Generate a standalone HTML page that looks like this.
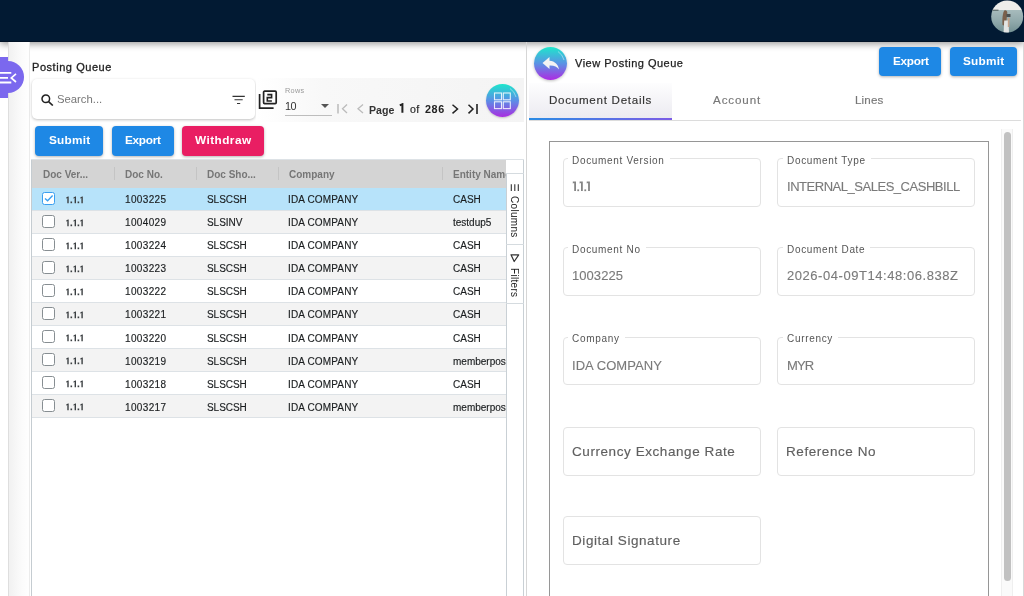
<!DOCTYPE html>
<html><head><meta charset="utf-8">
<style>
*{margin:0;padding:0;box-sizing:border-box}
html,body{width:1024px;height:596px;overflow:hidden;background:#fff;font-family:"Liberation Sans",sans-serif;position:relative}
.t,.cell,.lbl,.val,.ph{will-change:transform}
.a{position:absolute}
.t{position:absolute;white-space:nowrap;line-height:1}
#topbar{left:0;top:0;width:1024px;height:42px;background:#021a33;box-shadow:0 2px 7px rgba(0,0,0,.4);z-index:5}
#topbar:after{content:"";position:absolute;left:0;right:0;bottom:0;height:1px;background:#011226}
.btn{position:absolute;border-radius:4px;background:#1e88e5;box-shadow:0 1px 3px rgba(0,0,0,.3);color:#fff;font-weight:bold}
.hdr{position:absolute;top:159.5px;height:28.2px;left:31.5px;width:475px;background:#d4d4d4}
.row{position:absolute;left:31.5px;width:475px;height:23px;border-bottom:1px solid #dde2e6}
.cb{position:absolute;left:10.6px;top:4.6px;width:13px;height:13px;border:1.4px solid #878e92;border-radius:2.5px;background:#fff}
.cell{position:absolute;top:0;line-height:1;font-size:10px;color:#1a1d1f;white-space:nowrap;-webkit-text-stroke:0.15px #1a1d1f}
.fbox{position:absolute;width:198px;height:48.6px;border:1px solid #e3e3e3;border-radius:4px}
.lbl{position:absolute;left:4.6px;top:-3.4px;padding:0 5px 0 4px;background:#fff;font-size:10px;line-height:10px;color:#555;white-space:nowrap}
.val{position:absolute;left:8.4px;top:20.9px;font-size:13px;line-height:13px;color:#7a7a7a;white-space:nowrap;-webkit-text-stroke:0.12px #7a7a7a}
.ph{position:absolute;left:8.2px;top:17.4px;font-size:13.5px;line-height:13px;color:#5f5f5f;white-space:nowrap;-webkit-text-stroke:0.15px #5f5f5f}
</style></head><body>

<!-- top bar -->
<div id="topbar" class="a">
  <svg class="a" style="left:991px;top:0" width="33" height="34" viewBox="0 0 33 34">
  <defs><clipPath id="av"><circle cx="16.2" cy="16.5" r="16"/></clipPath>
  <linearGradient id="sea" x1="0" y1="0" x2="0" y2="1"><stop offset="0" stop-color="#a7bbbc"/><stop offset="0.5" stop-color="#8fa8aa"/><stop offset="1" stop-color="#6f8d90"/></linearGradient></defs>
  <g clip-path="url(#av)">
    <rect x="0" y="0" width="33" height="10.5" fill="#eeedea"/>
    <rect x="0" y="10" width="33" height="24" fill="url(#sea)"/>
    <path d="M1 10.2H7.5" stroke="#4a5655" stroke-width="1"/>
    <path d="M11.5 25C11 19 11.8 12.5 13.3 10.5C14.8 9.6 16.3 10.5 16.3 13L14.8 26Z" fill="#7a604b"/>
    <path d="M13.2 20.5H17.5L18 33H12.6Z" fill="#e3e5e4"/>
    <path d="M15.5 14H19.5V17H15.5Z" fill="#4a5254"/>
    <path d="M16.8 17.5L18.6 18.2L18.3 27L16.8 27Z" fill="#c4a28b"/>
  </g>
</svg>

<!-- left sidebar strip -->
<div class="a" style="left:8px;top:42px;width:1px;height:554px;background:#dedede"></div>
<div class="a" style="left:9px;top:42px;width:20.5px;height:554px;background:linear-gradient(90deg,#f1f1f1,#fbfbfb 60%,#fff)"></div>
<div class="a" style="left:29px;top:42px;width:1px;height:554px;background:#ececec"></div>

<!-- purple toggle -->
<div class="a" style="left:0;top:57px;width:8px;height:41px;background:#7b68ee"></div>
<div class="a" style="left:-8px;top:61px;width:32px;height:32px;border-radius:50%;background:#7b68ee"></div>
<svg class="a" style="left:0;top:70px" width="18" height="16" viewBox="0 0 18 16">
  <path d="M0 2.8H11.3M0 7.8H8M0 12.5H11.3" stroke="#fff" stroke-width="1.8"/>
  <path d="M16 3.8L11.3 7.9L16 12" stroke="#fff" stroke-width="1.7" fill="none"/>
</svg>

<!-- left panel -->
<div class="t" style="left:31.5px;top:62px;font-size:11px;color:#222;-webkit-text-stroke:0.3px #222;letter-spacing:0.55px">Posting Queue</div>

<div class="a" style="left:31.5px;top:79px;width:223.5px;height:40px;border-radius:5px;background:#fff;box-shadow:0 1px 3px rgba(0,0,0,.25)"></div>
<svg class="a" style="left:41px;top:94px" width="13" height="12" viewBox="0 0 13 12">
  <circle cx="4.8" cy="4.8" r="3.8" stroke="#222" stroke-width="1.5" fill="none"/>
  <path d="M7.6 7.6L11.8 11.5" stroke="#222" stroke-width="1.6"/>
</svg>
<div class="t" style="left:56.5px;top:93.5px;font-size:11.3px;color:#777">Search...</div>
<svg class="a" style="left:232px;top:95px" width="14" height="10" viewBox="0 0 14 10">
  <path d="M0.5 1.4H12.8M2.5 4.7H10.7M5 8.5H8.2" stroke="#333" stroke-width="1.1"/>
</svg>

<!-- pagination bar -->
<div class="a" style="left:256px;top:78px;width:268px;height:44px;background:linear-gradient(90deg,#fff 0%,#f8f8f8 25%,#f4f4f4 100%)"></div>
<svg class="a" style="left:258px;top:89px" width="20" height="20" viewBox="0 0 20 20">
  <path d="M1.6 5V19.1H15.6" stroke="#222" stroke-width="1.7" fill="none"/>
  <rect x="5.6" y="2.2" width="12.6" height="12.4" rx="1" stroke="#222" stroke-width="1.7" fill="none"/>
  <path d="M9.3 5.6H13.6V8.6H9.3V12H13.9" stroke="#222" stroke-width="1.6" fill="none"/>
</svg>
<div class="t" style="left:284.7px;top:86.8px;font-size:7.3px;color:#9a9a9a;letter-spacing:0.3px">Rows</div>
<div class="t" style="left:284.5px;top:100.8px;font-size:10.8px;color:#333;letter-spacing:-0.4px">10</div>
<svg class="a" style="left:320px;top:103px" width="10" height="6" viewBox="0 0 10 6"><path d="M1 1H9L5 5Z" fill="#555"/></svg>
<div class="a" style="left:284.7px;top:115.2px;width:47.5px;height:1.2px;background:#bdbdbd"></div>
<svg class="a" style="left:336px;top:103px" width="14" height="12" viewBox="0 0 14 12">
  <path d="M2 1V10.5" stroke="#bbb" stroke-width="1.5"/>
  <path d="M11 1.5L6.5 5.8L11 10" stroke="#bbb" stroke-width="1.3" fill="none"/>
</svg>
<svg class="a" style="left:355px;top:103px" width="10" height="12" viewBox="0 0 10 12">
  <path d="M8 1.5L3 5.8L8 10" stroke="#bbb" stroke-width="1.3" fill="none"/>
</svg>
<div class="t" style="left:368.8px;top:104.5px;font-size:10.6px;font-weight:bold;color:#333">Page</div>
<svg class="a" style="left:399px;top:103px" width="6" height="11" viewBox="0 0 6 11"><path d="M0.8 2.4L3.4 1.2V9.8" stroke="#222" stroke-width="2" fill="none" stroke-linejoin="miter"/></svg>
<div class="t" style="left:409.5px;top:104px;font-size:10.6px;color:#2a2a2a;-webkit-text-stroke:0.2px #2a2a2a;letter-spacing:0.3px">of</div>
<div class="t" style="left:425.3px;top:104px;font-size:10.8px;font-weight:bold;color:#222;letter-spacing:0.6px">286</div>
<svg class="a" style="left:450px;top:103px" width="10" height="12" viewBox="0 0 10 12">
  <path d="M2.5 1.8L7.5 6L2.5 10.4" stroke="#222" stroke-width="1.5" fill="none"/>
</svg>
<svg class="a" style="left:466px;top:103px" width="14" height="12" viewBox="0 0 14 12">
  <path d="M2.5 1.8L7 6L2.5 10.4" stroke="#222" stroke-width="1.5" fill="none"/>
  <path d="M11 1V11" stroke="#222" stroke-width="1.6"/>
</svg>
<div class="a" style="left:486px;top:84.2px;width:33px;height:33px;border-radius:50%;background:linear-gradient(#1de6cc,#5a8fe6 50%,#a92ee0);box-shadow:0 1px 2px rgba(0,0,0,.2)"></div>
<svg class="a" style="left:486px;top:84.2px" width="33" height="33" viewBox="0 0 33 33"><path d="M24 4.5A14.5 14.5 0 0 1 30 13" stroke="rgba(255,255,255,.55)" stroke-width="0.8" fill="none"/></svg>
<svg class="a" style="left:493px;top:92px" width="19" height="18" viewBox="0 0 19 18">
  <rect x="1.5" y="1" width="7" height="6.8" stroke="#fff" stroke-width="1.1" fill="none" opacity=".85"/>
  <rect x="10.3" y="1" width="7" height="6.8" stroke="#fff" stroke-width="1.1" fill="none" opacity=".85"/>
  <rect x="1.5" y="9.8" width="7" height="6.8" stroke="#fff" stroke-width="1.1" fill="none" opacity=".85"/>
  <rect x="10.3" y="9.8" width="7" height="6.8" stroke="#fff" stroke-width="1.1" fill="none" opacity=".85"/>
</svg>

<!-- action buttons -->
<div class="btn" style="left:35.4px;top:126px;width:67.6px;height:29.8px"></div>
<div class="t" style="left:48.6px;top:135px;font-size:11.8px;font-weight:bold;color:#fff;letter-spacing:0.24px">Submit</div>
<div class="btn" style="left:112px;top:126px;width:61.5px;height:29.8px"></div>
<div class="t" style="left:124.6px;top:135px;font-size:11.8px;font-weight:bold;color:#fff;letter-spacing:-0.3px">Export</div>
<div class="btn" style="left:182px;top:126px;width:81.5px;height:29.8px;background:#e91e63"></div>
<div class="t" style="left:194.9px;top:135px;font-size:11.8px;font-weight:bold;color:#fff;letter-spacing:0.44px">Withdraw</div>

<!-- grid -->
<div class="a" style="left:30.5px;top:159.5px;width:1px;height:437px;background:#c5ccd1"></div>
<div class="hdr"></div>
<div class="t" style="left:42.6px;top:170px;font-size:10px;font-weight:bold;color:#767676">Doc Ver...</div>
<div class="t" style="left:124.8px;top:170px;font-size:10px;font-weight:bold;color:#767676">Doc No.</div>
<div class="t" style="left:206.9px;top:170px;font-size:10px;font-weight:bold;color:#767676">Doc Sho...</div>
<div class="t" style="left:289px;top:170px;font-size:10px;font-weight:bold;color:#767676">Company</div>
<div class="a" style="left:442px;top:159.5px;width:64.6px;height:28px;overflow:hidden"><div class="t" style="left:11.4px;top:10.5px;font-size:10px;font-weight:bold;color:#767676">Entity Name</div></div>
<div class="a" style="left:113.5px;top:167px;width:1px;height:13px;background:#c4c4c4"></div>
<div class="a" style="left:196px;top:167px;width:1px;height:13px;background:#c4c4c4"></div>
<div class="a" style="left:278.3px;top:167px;width:1px;height:13px;background:#c4c4c4"></div>
<div class="a" style="left:442.2px;top:167px;width:1px;height:13px;background:#c4c4c4"></div>

<div id="rows"><div class="row" style="top:187.5px;background:#b7e3fa"><div class="cb" style="border-color:#3a9ff0;border-width:1.6px"><svg class="a" style="left:0.6px;top:1.4px" width="10" height="8" viewBox="0 0 10 8"><path d="M1 4.4L3.6 6.7L8.6 1.6" stroke="#3a9ff0" stroke-width="1.4" fill="none"/></svg></div><svg class="a" style="left:32px;top:7px" width="20" height="10" viewBox="63.5 7 20 10"><path d="M68.2 8.6V15.3H66.8V10.1L65.5 10.6V9.7L67.4 8.6Z" fill="#3b3f42"/><path d="M75.5 8.6V15.3H74.1V10.1L72.8 10.6V9.7L74.7 8.6Z" fill="#3b3f42"/><path d="M82.3 8.6V15.3H80.89999999999999V10.1L79.6 10.6V9.7L81.5 8.6Z" fill="#3b3f42"/><rect x="70.0" y="13.5" width="1.6" height="1.7" fill="#3b3f42"/><rect x="77.10000000000001" y="13.5" width="1.6" height="1.7" fill="#3b3f42"/></svg><div class="cell" style="left:93.1px;top:7.9px;letter-spacing:0.35px">1003225</div><div class="cell" style="left:175.1px;top:7.9px;letter-spacing:-0.05px">SLSCSH</div><div class="cell" style="left:256.3px;top:7.9px;letter-spacing:0.15px">IDA COMPANY</div><div class="a" style="left:410px;top:0;width:65px;height:22px;overflow:hidden"><div class="cell" style="left:11.6px;top:7.9px">CASH</div></div></div>
<div class="row" style="top:210.5px;background:#f3f3f3"><div class="cb"></div><svg class="a" style="left:32px;top:7px" width="20" height="10" viewBox="63.5 7 20 10"><path d="M68.2 8.6V15.3H66.8V10.1L65.5 10.6V9.7L67.4 8.6Z" fill="#3b3f42"/><path d="M75.5 8.6V15.3H74.1V10.1L72.8 10.6V9.7L74.7 8.6Z" fill="#3b3f42"/><path d="M82.3 8.6V15.3H80.89999999999999V10.1L79.6 10.6V9.7L81.5 8.6Z" fill="#3b3f42"/><rect x="70.0" y="13.5" width="1.6" height="1.7" fill="#3b3f42"/><rect x="77.10000000000001" y="13.5" width="1.6" height="1.7" fill="#3b3f42"/></svg><div class="cell" style="left:93.1px;top:7.9px;letter-spacing:0.35px">1004029</div><div class="cell" style="left:175.1px;top:7.9px;letter-spacing:-0.05px">SLSINV</div><div class="cell" style="left:256.3px;top:7.9px;letter-spacing:0.15px">IDA COMPANY</div><div class="a" style="left:410px;top:0;width:65px;height:22px;overflow:hidden"><div class="cell" style="left:11.6px;top:7.9px">testdup5</div></div></div>
<div class="row" style="top:233.6px;background:#fff"><div class="cb"></div><svg class="a" style="left:32px;top:7px" width="20" height="10" viewBox="63.5 7 20 10"><path d="M68.2 8.6V15.3H66.8V10.1L65.5 10.6V9.7L67.4 8.6Z" fill="#3b3f42"/><path d="M75.5 8.6V15.3H74.1V10.1L72.8 10.6V9.7L74.7 8.6Z" fill="#3b3f42"/><path d="M82.3 8.6V15.3H80.89999999999999V10.1L79.6 10.6V9.7L81.5 8.6Z" fill="#3b3f42"/><rect x="70.0" y="13.5" width="1.6" height="1.7" fill="#3b3f42"/><rect x="77.10000000000001" y="13.5" width="1.6" height="1.7" fill="#3b3f42"/></svg><div class="cell" style="left:93.1px;top:7.9px;letter-spacing:0.35px">1003224</div><div class="cell" style="left:175.1px;top:7.9px;letter-spacing:-0.05px">SLSCSH</div><div class="cell" style="left:256.3px;top:7.9px;letter-spacing:0.15px">IDA COMPANY</div><div class="a" style="left:410px;top:0;width:65px;height:22px;overflow:hidden"><div class="cell" style="left:11.6px;top:7.9px">CASH</div></div></div>
<div class="row" style="top:256.6px;background:#f3f3f3"><div class="cb"></div><svg class="a" style="left:32px;top:7px" width="20" height="10" viewBox="63.5 7 20 10"><path d="M68.2 8.6V15.3H66.8V10.1L65.5 10.6V9.7L67.4 8.6Z" fill="#3b3f42"/><path d="M75.5 8.6V15.3H74.1V10.1L72.8 10.6V9.7L74.7 8.6Z" fill="#3b3f42"/><path d="M82.3 8.6V15.3H80.89999999999999V10.1L79.6 10.6V9.7L81.5 8.6Z" fill="#3b3f42"/><rect x="70.0" y="13.5" width="1.6" height="1.7" fill="#3b3f42"/><rect x="77.10000000000001" y="13.5" width="1.6" height="1.7" fill="#3b3f42"/></svg><div class="cell" style="left:93.1px;top:7.9px;letter-spacing:0.35px">1003223</div><div class="cell" style="left:175.1px;top:7.9px;letter-spacing:-0.05px">SLSCSH</div><div class="cell" style="left:256.3px;top:7.9px;letter-spacing:0.15px">IDA COMPANY</div><div class="a" style="left:410px;top:0;width:65px;height:22px;overflow:hidden"><div class="cell" style="left:11.6px;top:7.9px">CASH</div></div></div>
<div class="row" style="top:279.6px;background:#fff"><div class="cb"></div><svg class="a" style="left:32px;top:7px" width="20" height="10" viewBox="63.5 7 20 10"><path d="M68.2 8.6V15.3H66.8V10.1L65.5 10.6V9.7L67.4 8.6Z" fill="#3b3f42"/><path d="M75.5 8.6V15.3H74.1V10.1L72.8 10.6V9.7L74.7 8.6Z" fill="#3b3f42"/><path d="M82.3 8.6V15.3H80.89999999999999V10.1L79.6 10.6V9.7L81.5 8.6Z" fill="#3b3f42"/><rect x="70.0" y="13.5" width="1.6" height="1.7" fill="#3b3f42"/><rect x="77.10000000000001" y="13.5" width="1.6" height="1.7" fill="#3b3f42"/></svg><div class="cell" style="left:93.1px;top:7.9px;letter-spacing:0.35px">1003222</div><div class="cell" style="left:175.1px;top:7.9px;letter-spacing:-0.05px">SLSCSH</div><div class="cell" style="left:256.3px;top:7.9px;letter-spacing:0.15px">IDA COMPANY</div><div class="a" style="left:410px;top:0;width:65px;height:22px;overflow:hidden"><div class="cell" style="left:11.6px;top:7.9px">CASH</div></div></div>
<div class="row" style="top:302.6px;background:#f3f3f3"><div class="cb"></div><svg class="a" style="left:32px;top:7px" width="20" height="10" viewBox="63.5 7 20 10"><path d="M68.2 8.6V15.3H66.8V10.1L65.5 10.6V9.7L67.4 8.6Z" fill="#3b3f42"/><path d="M75.5 8.6V15.3H74.1V10.1L72.8 10.6V9.7L74.7 8.6Z" fill="#3b3f42"/><path d="M82.3 8.6V15.3H80.89999999999999V10.1L79.6 10.6V9.7L81.5 8.6Z" fill="#3b3f42"/><rect x="70.0" y="13.5" width="1.6" height="1.7" fill="#3b3f42"/><rect x="77.10000000000001" y="13.5" width="1.6" height="1.7" fill="#3b3f42"/></svg><div class="cell" style="left:93.1px;top:7.9px;letter-spacing:0.35px">1003221</div><div class="cell" style="left:175.1px;top:7.9px;letter-spacing:-0.05px">SLSCSH</div><div class="cell" style="left:256.3px;top:7.9px;letter-spacing:0.15px">IDA COMPANY</div><div class="a" style="left:410px;top:0;width:65px;height:22px;overflow:hidden"><div class="cell" style="left:11.6px;top:7.9px">CASH</div></div></div>
<div class="row" style="top:325.7px;background:#fff"><div class="cb"></div><svg class="a" style="left:32px;top:7px" width="20" height="10" viewBox="63.5 7 20 10"><path d="M68.2 8.6V15.3H66.8V10.1L65.5 10.6V9.7L67.4 8.6Z" fill="#3b3f42"/><path d="M75.5 8.6V15.3H74.1V10.1L72.8 10.6V9.7L74.7 8.6Z" fill="#3b3f42"/><path d="M82.3 8.6V15.3H80.89999999999999V10.1L79.6 10.6V9.7L81.5 8.6Z" fill="#3b3f42"/><rect x="70.0" y="13.5" width="1.6" height="1.7" fill="#3b3f42"/><rect x="77.10000000000001" y="13.5" width="1.6" height="1.7" fill="#3b3f42"/></svg><div class="cell" style="left:93.1px;top:7.9px;letter-spacing:0.35px">1003220</div><div class="cell" style="left:175.1px;top:7.9px;letter-spacing:-0.05px">SLSCSH</div><div class="cell" style="left:256.3px;top:7.9px;letter-spacing:0.15px">IDA COMPANY</div><div class="a" style="left:410px;top:0;width:65px;height:22px;overflow:hidden"><div class="cell" style="left:11.6px;top:7.9px">CASH</div></div></div>
<div class="row" style="top:348.7px;background:#f3f3f3"><div class="cb"></div><svg class="a" style="left:32px;top:7px" width="20" height="10" viewBox="63.5 7 20 10"><path d="M68.2 8.6V15.3H66.8V10.1L65.5 10.6V9.7L67.4 8.6Z" fill="#3b3f42"/><path d="M75.5 8.6V15.3H74.1V10.1L72.8 10.6V9.7L74.7 8.6Z" fill="#3b3f42"/><path d="M82.3 8.6V15.3H80.89999999999999V10.1L79.6 10.6V9.7L81.5 8.6Z" fill="#3b3f42"/><rect x="70.0" y="13.5" width="1.6" height="1.7" fill="#3b3f42"/><rect x="77.10000000000001" y="13.5" width="1.6" height="1.7" fill="#3b3f42"/></svg><div class="cell" style="left:93.1px;top:7.9px;letter-spacing:0.35px">1003219</div><div class="cell" style="left:175.1px;top:7.9px;letter-spacing:-0.05px">SLSCSH</div><div class="cell" style="left:256.3px;top:7.9px;letter-spacing:0.15px">IDA COMPANY</div><div class="a" style="left:410px;top:0;width:65px;height:22px;overflow:hidden"><div class="cell" style="left:11.6px;top:7.9px">memberpos</div></div></div>
<div class="row" style="top:371.7px;background:#fff"><div class="cb"></div><svg class="a" style="left:32px;top:7px" width="20" height="10" viewBox="63.5 7 20 10"><path d="M68.2 8.6V15.3H66.8V10.1L65.5 10.6V9.7L67.4 8.6Z" fill="#3b3f42"/><path d="M75.5 8.6V15.3H74.1V10.1L72.8 10.6V9.7L74.7 8.6Z" fill="#3b3f42"/><path d="M82.3 8.6V15.3H80.89999999999999V10.1L79.6 10.6V9.7L81.5 8.6Z" fill="#3b3f42"/><rect x="70.0" y="13.5" width="1.6" height="1.7" fill="#3b3f42"/><rect x="77.10000000000001" y="13.5" width="1.6" height="1.7" fill="#3b3f42"/></svg><div class="cell" style="left:93.1px;top:7.9px;letter-spacing:0.35px">1003218</div><div class="cell" style="left:175.1px;top:7.9px;letter-spacing:-0.05px">SLSCSH</div><div class="cell" style="left:256.3px;top:7.9px;letter-spacing:0.15px">IDA COMPANY</div><div class="a" style="left:410px;top:0;width:65px;height:22px;overflow:hidden"><div class="cell" style="left:11.6px;top:7.9px">CASH</div></div></div>
<div class="row" style="top:394.8px;background:#f3f3f3"><div class="cb"></div><svg class="a" style="left:32px;top:7px" width="20" height="10" viewBox="63.5 7 20 10"><path d="M68.2 8.6V15.3H66.8V10.1L65.5 10.6V9.7L67.4 8.6Z" fill="#3b3f42"/><path d="M75.5 8.6V15.3H74.1V10.1L72.8 10.6V9.7L74.7 8.6Z" fill="#3b3f42"/><path d="M82.3 8.6V15.3H80.89999999999999V10.1L79.6 10.6V9.7L81.5 8.6Z" fill="#3b3f42"/><rect x="70.0" y="13.5" width="1.6" height="1.7" fill="#3b3f42"/><rect x="77.10000000000001" y="13.5" width="1.6" height="1.7" fill="#3b3f42"/></svg><div class="cell" style="left:93.1px;top:7.9px;letter-spacing:0.35px">1003217</div><div class="cell" style="left:175.1px;top:7.9px;letter-spacing:-0.05px">SLSCSH</div><div class="cell" style="left:256.3px;top:7.9px;letter-spacing:0.15px">IDA COMPANY</div><div class="a" style="left:410px;top:0;width:65px;height:22px;overflow:hidden"><div class="cell" style="left:11.6px;top:7.9px">memberpos</div></div></div></div><!--/rows-->

<!-- side bar of grid -->
<div class="a" style="left:506.4px;top:159.5px;width:17.4px;height:437px;border-right:1px solid #c9d0d5;background:#fff"></div>
<div class="a" style="left:506.4px;top:173px;width:1px;height:423px;background:#c9d0d5"></div>
<div class="a" style="left:30.5px;top:159.2px;width:493.3px;height:1px;background:#dde2e6"></div>
<div class="a" style="left:506.4px;top:173px;width:17.4px;height:1px;background:#d5dbdf"></div>
<div class="a" style="left:506.4px;top:244px;width:17.4px;height:1px;background:#d5dbdf"></div>
<div class="a" style="left:506.4px;top:303px;width:17.4px;height:1px;background:#d5dbdf"></div>
<svg class="a" style="left:506px;top:180px" width="18" height="120" viewBox="506 180 18 120">
  <path d="M511.3 184.2V190.9M514.8 184.2V190.9M518.3 184.2V190.9" stroke="#333" stroke-width="1.1"/>
  <path d="M511 254.8H518.7L514.2 261.5Z" stroke="#333" stroke-width="1.2" fill="none" stroke-linejoin="round"/>
</svg>
<div class="t" style="left:519.1px;top:196.2px;font-size:10px;color:#222;transform-origin:0 0;transform:rotate(90deg);letter-spacing:0.3px">Columns</div>
<div class="t" style="left:519.1px;top:267.6px;font-size:10px;color:#222;transform-origin:0 0;transform:rotate(90deg);letter-spacing:0.3px">Filters</div>
<div class="a" style="left:525.5px;top:42px;width:1.2px;height:554px;background:#d6d6d6"></div>

<!-- right panel -->
<div class="a" style="left:534px;top:47px;width:33px;height:33px;border-radius:50%;background:linear-gradient(#1ee6cc,#5a93e4 50%,#ad2be2);box-shadow:0 1px 3px rgba(0,0,0,.25)"></div>
<svg class="a" style="left:534px;top:47px" width="33" height="33" viewBox="0 0 33 33"><path d="M24 4.5A14.5 14.5 0 0 1 30 13" stroke="rgba(255,255,255,.55)" stroke-width="0.8" fill="none"/></svg>
<svg class="a" style="left:541px;top:55px" width="20" height="16" viewBox="0 0 20 16">
  <path d="M8.5 2L1.5 8L8.5 14V10.5C13 10.3 16 11.5 18 14.5C17.3 9.5 14 6.3 8.5 5.8Z" fill="#f3f3f3"/>
</svg>
<div class="t" style="left:575px;top:58px;font-size:11px;color:#222;-webkit-text-stroke:0.25px #222;letter-spacing:0.5px">View Posting Queue</div>

<div class="btn" style="left:879.3px;top:47.1px;width:61.7px;height:29px"></div>
<div class="t" style="left:892.6px;top:55.6px;font-size:11.8px;font-weight:bold;color:#fff;letter-spacing:-0.3px">Export</div>
<div class="btn" style="left:949.7px;top:47.1px;width:67.4px;height:29px"></div>
<div class="t" style="left:962.9px;top:55.6px;font-size:11.8px;font-weight:bold;color:#fff;letter-spacing:0.24px">Submit</div>

<!-- tabs -->
<div class="a" style="left:529px;top:120px;width:492px;height:1px;background:#dcdcdc"></div>
<div class="a" style="left:529px;top:83px;width:143px;height:37px;background:linear-gradient(#fdfdfe,#ebeaf0)"></div>
<div class="a" style="left:529px;top:118.4px;width:143px;height:2px;background:linear-gradient(90deg,#2a8be4,#7c5ce6)"></div>
<div class="t" style="left:548.5px;top:94px;font-size:11.6px;color:#333;-webkit-text-stroke:0.15px #333;letter-spacing:0.72px">Document Details</div>
<div class="t" style="left:713.3px;top:94px;font-size:11.6px;color:#777;-webkit-text-stroke:0.15px #777;letter-spacing:0.9px">Account</div>
<div class="t" style="left:854.5px;top:94px;font-size:11.6px;color:#777;-webkit-text-stroke:0.15px #777;letter-spacing:0.17px">Lines</div>

<!-- form box -->
<div class="a" style="left:549.2px;top:141px;width:439.8px;height:470px;border:1.5px solid #969696"></div>
<div class="a" style="left:1001.2px;top:129px;width:11.4px;height:467px;background:#fafafa;border-left:1px solid #efefef;border-right:1px solid #efefef"></div>
<div class="a" style="left:1004px;top:131.6px;width:7px;height:449.4px;border-radius:3.5px;background:#c1c1c1"></div>
<div class="a" style="left:1023px;top:42px;width:1px;height:554px;background:#d8d8d8"></div>

<div class="fbox" style="left:562.8px;top:158.1px"><div class="lbl" style="letter-spacing:0.68px">Document Version</div><svg class="a" style="left:7px;top:19.5px" width="32" height="14" viewBox="570.8 178.6 32 14"><path d="M575.8 181V190.7H574.0V182.6L572.6 183V181.2Z" fill="#858585"/><path d="M582.6 181V190.7H580.8000000000001V182.6L579.4000000000001 183V181.2Z" fill="#858585"/><path d="M589.6999999999999 181V190.7H587.9V182.6L586.5 183V181.2Z" fill="#858585"/><rect x="577.1" y="189" width="1.8" height="1.75" fill="#858585"/><rect x="584.15" y="189" width="1.8" height="1.75" fill="#858585"/></svg></div>
<div class="fbox" style="left:777.2px;top:158.1px"><div class="lbl" style="letter-spacing:0.68px">Document Type</div><div class="val" style="letter-spacing:-0.47px">INTERNAL_SALES_CASHBILL</div></div>
<div class="fbox" style="left:562.8px;top:247.2px"><div class="lbl" style="letter-spacing:0.68px">Document No</div><div class="val" style="letter-spacing:0.06px">1003225</div></div>
<div class="fbox" style="left:777.2px;top:247.2px"><div class="lbl" style="letter-spacing:0.68px">Document Date</div><div class="val" style="letter-spacing:0.55px">2026-04-09T14:48:06.838Z</div></div>
<div class="fbox" style="left:562.8px;top:336.7px"><div class="lbl" style="letter-spacing:0.68px">Company</div><div class="val" style="letter-spacing:0.05px">IDA COMPANY</div></div>
<div class="fbox" style="left:777.2px;top:336.7px"><div class="lbl" style="letter-spacing:0.68px">Currency</div><div class="val" style="letter-spacing:-0.9px">MYR</div></div>
<div class="fbox" style="left:562.8px;top:427px"><div class="ph" style="letter-spacing:0.57px">Currency Exchange Rate</div></div>
<div class="fbox" style="left:777.2px;top:427px"><div class="ph" style="letter-spacing:0.57px">Reference No</div></div>
<div class="fbox" style="left:562.8px;top:516px"><div class="ph" style="letter-spacing:0.57px">Digital Signature</div></div>

</body></html>
